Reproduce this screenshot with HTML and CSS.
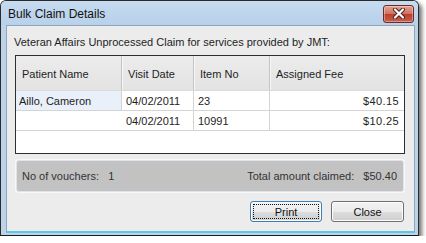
FILE: index.html
```html
<!DOCTYPE html>
<html lang="en">
<head>
    <meta charset="UTF-8">
    <title>Bulk Claim Details</title>
    <link rel="stylesheet" href="styles.css">
</head>
<body>
    <div class="window">
        <div class="titlebar">
            <span class="title">Bulk Claim Details</span>
            <button class="close-x" aria-label="Close">
                <svg width="14" height="11" viewBox="0 0 14 11">
                    <path d="M3 1.5 L11 9.5 M11 1.5 L3 9.5" stroke="#4a2020" stroke-width="4" stroke-linecap="round"/>
                    <path d="M3 1.5 L11 9.5 M11 1.5 L3 9.5" stroke="#fff" stroke-width="2.2" stroke-linecap="round"/>
                </svg>
            </button>
        </div>
        <div class="content">
            <p class="intro">Veteran Affairs Unprocessed Claim for services provided by JMT:</p>
            <div class="list">
                <div class="row head">
                    <div class="cell">Patient Name</div>
                    <div class="cell">Visit Date</div>
                    <div class="cell">Item No</div>
                    <div class="cell">Assigned Fee</div>
                </div>
                <div class="row">
                    <div class="cell name">Aillo, Cameron</div>
                    <div class="cell">04/02/2011</div>
                    <div class="cell">23</div>
                    <div class="cell fee">$40.15</div>
                </div>
                <div class="row">
                    <div class="cell blank"></div>
                    <div class="cell">04/02/2011</div>
                    <div class="cell">10991</div>
                    <div class="cell fee">$10.25</div>
                </div>
            </div>
            <div class="summary">
                <span>No of vouchers:&nbsp;&nbsp; 1</span>
                <span>Total amount claimed:&nbsp;&nbsp; $50.40</span>
            </div>
            <div class="actions">
                <button class="btn default"><span>Print</span></button>
                <button class="btn">Close</button>
            </div>
        </div>
    </div>
</body>
</html>
```

FILE: styles.css
```css
* {
    margin: 0;
    padding: 0;
    box-sizing: border-box;
}
body {
    font-family: 'Liberation Sans', Arial, sans-serif;
    font-size: 11px;
    color: #1e1e1e;
    background: #fff;
}
.window {
    width: 419px;
    height: 236px;
    border: 1px solid #2b2b2b;
    border-radius: 6px 6px 0 0;
    background: #bcd3ea;
    box-shadow: 3px 3px 4px rgba(0, 0, 0, 0.55);
    padding: 0 3px 2px 5px;
    display: flex;
    flex-direction: column;
    border-bottom: 1px solid #1a1a1a;
}
.titlebar {
    height: 24px;
    display: flex;
    align-items: center;
    justify-content: space-between;
    background: linear-gradient(#c6dbf0, #b8d0e9);
    margin: 0 -3px 0 -5px;
    padding: 0 4px 0 7px;
    border-radius: 5px 5px 0 0;
}
.title {
    font-size: 12px;
    color: #111;
    padding-top: 1px;
}
.close-x {
    width: 31px;
    height: 18px;
    margin-top: 1px;
    border: 1px solid #6b2a22;
    border-radius: 3px;
    background: linear-gradient(#e7a293, #d0705d 50%, #bb3e2a 51%, #c8614c);
    display: flex;
    align-items: center;
    justify-content: center;
    box-shadow: inset 0 0 0 1px rgba(255, 255, 255, 0.35);
}
.content {
    flex: 1;
    background: #ececec;
    border: 1px solid #8fa5bd;
    border-bottom: 2px solid #59c9e6;
    padding: 9px 10px 0 7px;
}
.intro {
    height: 20px;
    line-height: 14px;
}
.list {
    width: 390px;
    height: 99px;
    border: 1px solid #2e2e2e;
    background: #fff;
    margin-left: 1px;
}
.row {
    display: grid;
    grid-template-columns: 106px 72px 76px 1fr;
    height: 20px;
    border-bottom: 1px solid #d4d4d4;
}
.row.head {
    height: 35px;
    background: linear-gradient(#ececec, #e3e3e3);
    border-bottom: 1px solid #dadada;
}
.cell {
    display: flex;
    align-items: center;
    padding-left: 4px;
    border-right: 1px solid #d4d4d4;
    white-space: nowrap;
}
.cell:last-child {
    border-right: none;
}
.head .cell {
    padding-left: 6px;
    border-right: 1px solid #c4c4c4;
    box-shadow: 1px 0 0 #f8f8f8;
    padding-top: 2px;
}
.head .cell:last-child {
    border-right: none;
    box-shadow: none;
}
.name {
    background: #e9f0f9;
    padding-left: 3px;
}
.blank {
    border-right: 1px solid #fff;
}
.fee {
    justify-content: flex-end;
    padding-right: 5px;
    letter-spacing: 0.4px;
}
.summary {
    width: 388px;
    height: 32px;
    margin: 6px 0 0 2px;
    background: #c3c2c2;
    border: 1px solid #dfe4ec;
    border-radius: 3px;
    box-shadow: 0 0 0 1px #f6f8fb;
    display: flex;
    align-items: center;
    justify-content: space-between;
    padding: 0 6px 0 5px;
    color: #333;
}
.actions {
    display: flex;
    justify-content: flex-end;
    gap: 9px;
    margin-top: 9px;
    padding-right: 0;
}
.btn {
    width: 73px;
    height: 21px;
    font-family: inherit;
    font-size: 11px;
    color: #111;
    border: 1px solid #707070;
    border-radius: 3px;
    background: linear-gradient(#f3f3f3, #ebebeb 50%, #dddddd 51%, #cfcfcf);
    box-shadow: inset 0 0 0 1px #fcfcfc;
}
.btn.default {
    width: 72px;
    border-color: #3c7fb1;
    padding: 2px;
}
.btn.default span {
    display: flex;
    align-items: center;
    justify-content: center;
    height: 100%;
    border: 1px dotted #111;
}
```
